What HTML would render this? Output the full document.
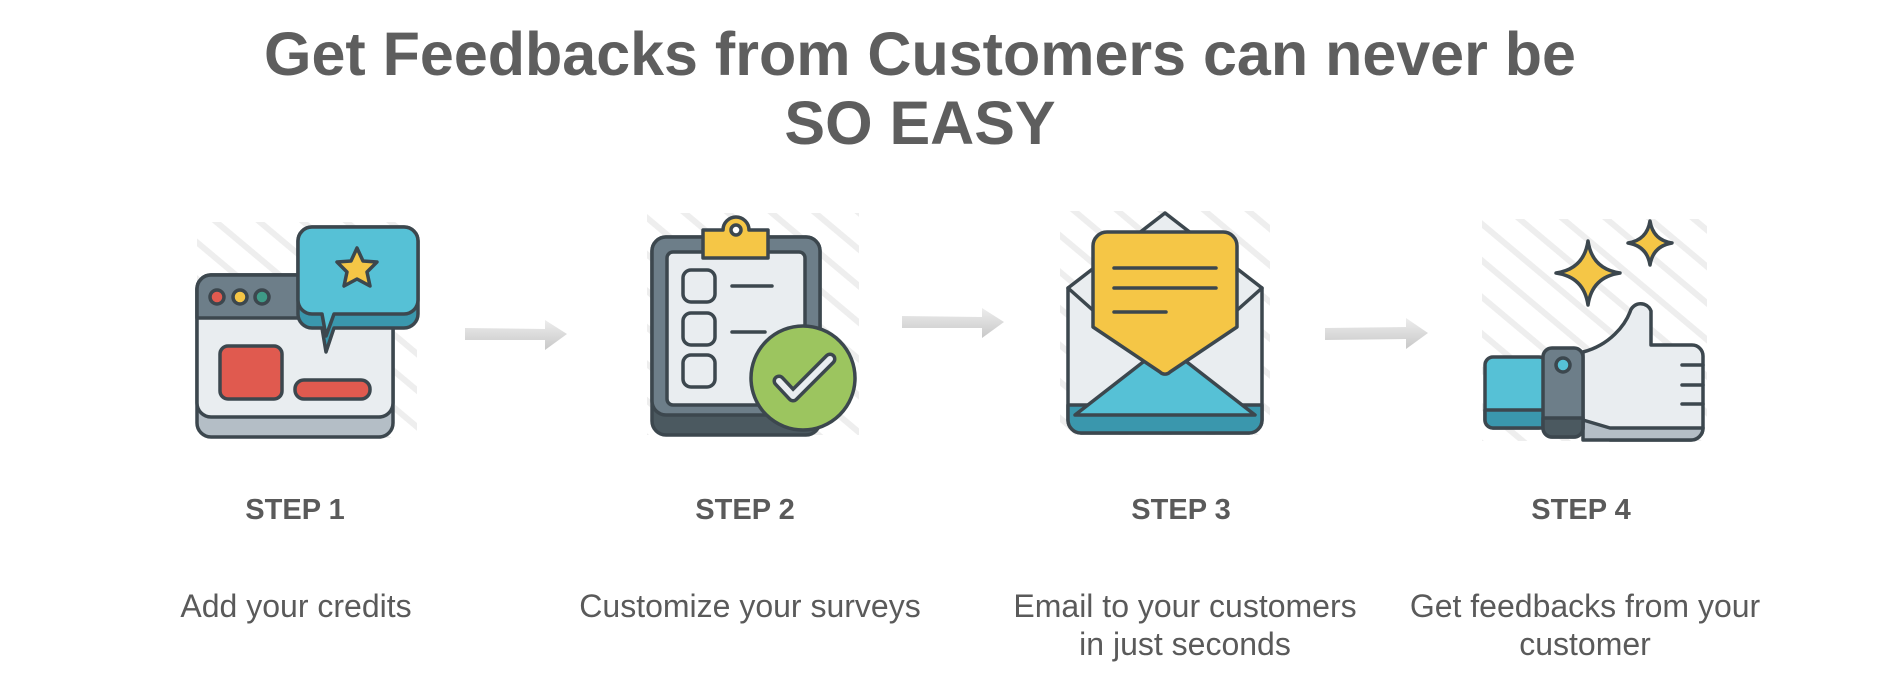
<!DOCTYPE html>
<html><head><meta charset="utf-8"><style>
html,body{margin:0;padding:0;background:#fff;width:1878px;height:690px;overflow:hidden;position:relative;font-family:"Liberation Sans",Arial,sans-serif;color:#5c5c5c}
.t{position:absolute;left:-19px;width:1878px;text-align:center;font-weight:bold;font-size:61px;line-height:69px;color:#5e5e5e;top:20px}
.s{position:absolute;font-weight:bold;font-size:29px;width:400px;text-align:center;top:494px;color:#5a5a5a}
.d{position:absolute;font-size:32px;line-height:38px;width:440px;text-align:center;top:587px;color:#5a5a5a}
svg{position:absolute;left:0;top:0}
</style></head><body>
<div class="t">Get Feedbacks from Customers can never be<br>SO EASY</div>
<svg width="1878" height="690" viewBox="0 0 1878 690">
<defs>
<pattern id="st" width="28" height="28" patternUnits="userSpaceOnUse" patternTransform="rotate(40)"><rect width="28" height="6" fill="#eeeeee"/></pattern>
<linearGradient id="ag" x1="0" y1="0" x2="0" y2="1"><stop offset="0" stop-color="#ededed"/><stop offset="1" stop-color="#c8c8c8"/></linearGradient>
</defs>
<rect x="197" y="222" width="220" height="216" fill="url(#st)"/>
<rect x="647" y="213" width="212" height="222" fill="url(#st)"/>
<rect x="1060" y="211" width="210" height="224" fill="url(#st)"/>
<rect x="1482" y="219" width="225" height="222" fill="url(#st)"/>
<g stroke="#3c474e" stroke-width="3.5" stroke-linejoin="round" stroke-linecap="round">
<rect x="197" y="275" width="196" height="162" rx="14" fill="#b4bec6"/>
<rect x="197" y="275" width="196" height="142" rx="14" fill="#e9edf0"/>
<path d="M197 318 V289 a14 14 0 0 1 14 -14 H320 V318 Z" fill="#6d7e89"/>
<circle cx="217" cy="297" r="7" fill="#e05a4f"/><circle cx="240" cy="297" r="7" fill="#f5c646"/><circle cx="262" cy="297" r="7" fill="#3e9b87"/>
<rect x="220" y="346" width="62" height="53" rx="8" fill="#e05a4f"/>
<rect x="295" y="380" width="75" height="19" rx="9" fill="#e05a4f"/>
<path d="M312 227 h92 a14 14 0 0 1 14 14 v73 a14 14 0 0 1 -14 14 h-70 l-8 24 l-4 -24 h-10 a14 14 0 0 1 -14 -14 v-73 a14 14 0 0 1 14 -14z" fill="#3a97ad"/>
<path d="M312 227 h92 a14 14 0 0 1 14 14 v59 a14 14 0 0 1 -14 14 h-70 l-8 22 l-4 -22 h-10 a14 14 0 0 1 -14 -14 v-59 a14 14 0 0 1 14 -14z" fill="#56c1d6"/>
<path d="M357 248 l6 13 14 1 -10 10 3 14 -13 -7 -13 7 3 -14 -10 -10 14 -1z" fill="#f5c646"/>
<rect x="652" y="237" width="168" height="198" rx="14" fill="#4b5960"/>
<rect x="652" y="237" width="168" height="178" rx="14" fill="#6d7e89"/>
<rect x="667" y="252" width="138" height="153" rx="6" fill="#e9edf0"/>
<rect x="683" y="270" width="32" height="32" rx="8" fill="#e9edf0"/>
<rect x="683" y="313" width="32" height="32" rx="8" fill="#e9edf0"/>
<rect x="683" y="355" width="32" height="32" rx="8" fill="#e9edf0"/>
<path d="M732 286 H772 M732 332 H765" fill="none"/>
<path d="M703 230 h20 a13 13 0 0 1 26 0 h19 v28 h-65z" fill="#f5c646"/>
<circle cx="736" cy="230" r="5" fill="#fff"/>
<circle cx="803" cy="378" r="52" fill="#9cc55f"/>
<path d="M779 381 l14 15 l37 -37" fill="none" stroke="#3c474e" stroke-width="13"/>
<path d="M779 381 l14 15 l37 -37" fill="none" stroke="#e9edf0" stroke-width="6"/>
<path d="M1068 288 L1165 213 L1262 288 V420 a13 13 0 0 1 -13 13 H1081 a13 13 0 0 1 -13 -13Z" fill="#e9edf0"/>
<path d="M1068 405 H1262 V420 a13 13 0 0 1 -13 13 H1081 a13 13 0 0 1 -13 -13Z" fill="#3a97ad"/>
<path d="M1075 415 L1165 345 L1255 415Z" fill="#56c1d6"/>
<path d="M1068 288 L1160 370 M1262 288 L1170 370" fill="none"/>
<path d="M1107 232 H1223 a14 14 0 0 1 14 14 V327 L1170 372 a7 7 0 0 1 -10 0 L1093 327 V246 a14 14 0 0 1 14 -14Z" fill="#f5c646"/>
<path d="M1114 268 H1216 M1114 288 H1216 M1114 312 H1166" fill="none"/>
<path d="M1588 241 q4 28 32 32 q-28 4 -32 32 q-4 -28 -32 -32 q28 -4 32 -32z" fill="#f5c646"/>
<path d="M1650 221 q3 19 22 22 q-19 3 -22 22 q-3 -19 -22 -22 q19 -3 22 -22z" fill="#f5c646"/>
<path d="M1583 352 C1610 345 1625 325 1630 312 a11 11 0 0 1 21 -1 V345 H1692 a11 11 0 0 1 11 11 V428 a12 12 0 0 1 -12 12 H1610 L1583 430Z" fill="#e9edf0"/>
<path d="M1583 420 L1610 428 H1703 V428 a12 12 0 0 1 -12 12 H1610 L1583 440Z" fill="#b4bec6"/>
<path d="M1682 365 H1703 M1682 385 H1703 M1682 404 H1703" fill="none"/>
<rect x="1485" y="357" width="62" height="71" rx="8" fill="#56c1d6"/>
<path d="M1485 410 H1547 V428 H1493 a8 8 0 0 1 -8 -8Z" fill="#3a97ad"/>
<rect x="1543" y="348" width="40" height="89" rx="9" fill="#6d7e89"/>
<path d="M1543 418 H1583 V428 a9 9 0 0 1 -9 9 H1552 a9 9 0 0 1 -9 -9Z" fill="#4b5960"/>
<circle cx="1563" cy="365" r="7" fill="#56c1d6"/>
</g>
<g fill="url(#ag)">
<path d="M465 328 L545 329 L545 320 L567 334 L545 350 L545 340 L465 340Z"/>
<path d="M902 316 L982 317 L982 308 L1004 322 L982 338 L982 328 L902 328Z"/>
<path d="M1325 328 L1406 327 L1406 318 L1428 333 L1406 349 L1406 339 L1325 340Z"/>
</g>
</svg>
<div class="s" style="left:95px">STEP 1</div>
<div class="s" style="left:545px">STEP 2</div>
<div class="s" style="left:981px">STEP 3</div>
<div class="s" style="left:1381px">STEP 4</div>
<div class="d" style="left:76px">Add your credits</div>
<div class="d" style="left:530px">Customize your surveys</div>
<div class="d" style="left:965px">Email to your customers<br>in just seconds</div>
<div class="d" style="left:1365px">Get feedbacks from your<br>customer</div>
</body></html>
